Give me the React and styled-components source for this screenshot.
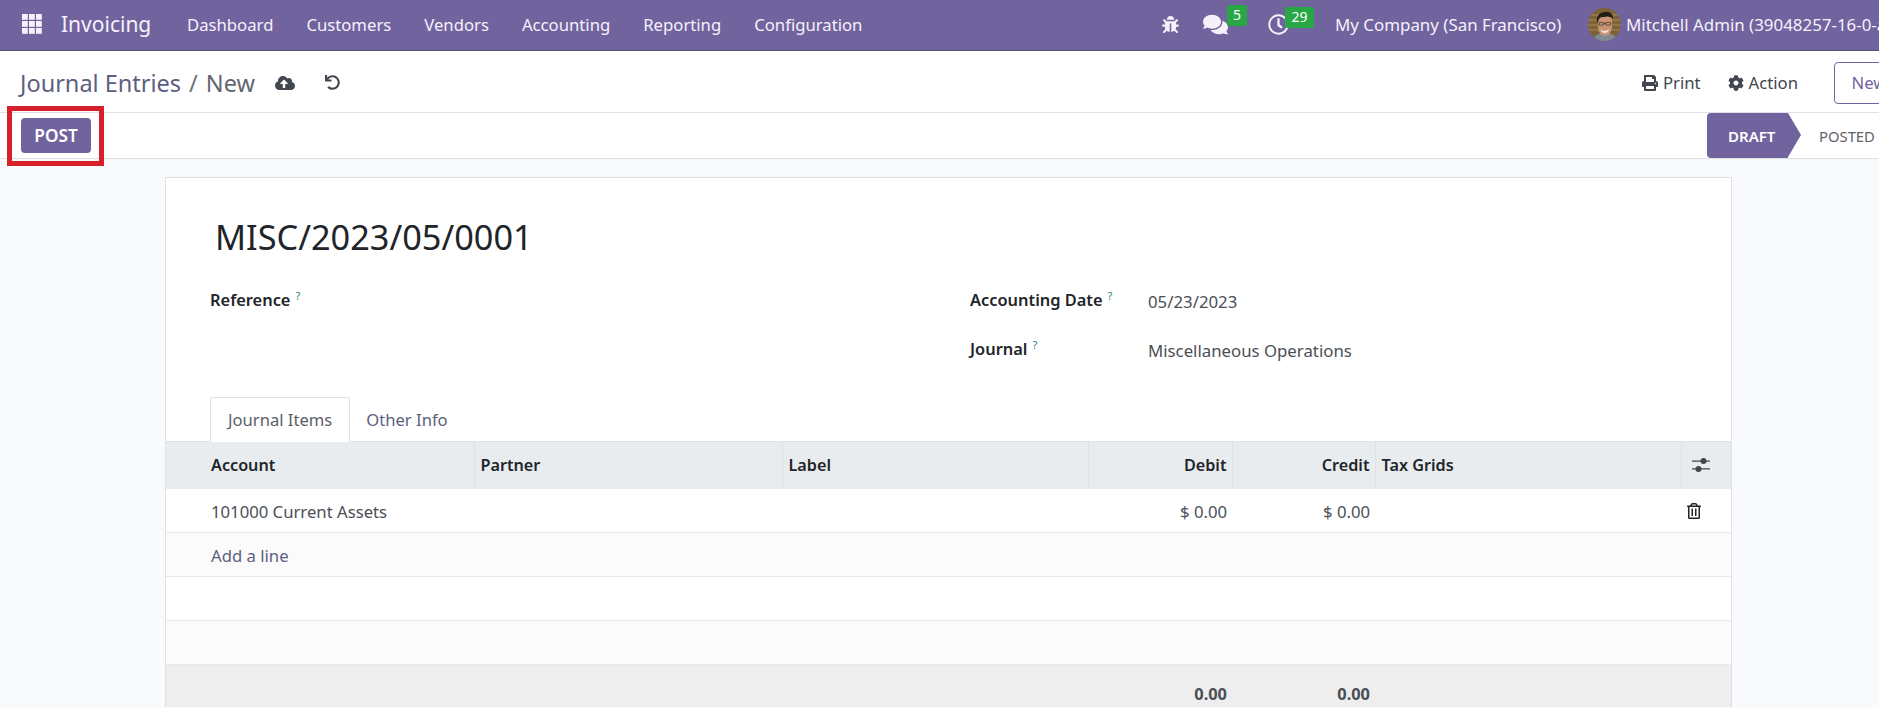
import React from 'react'
import styled, { createGlobalStyle } from 'styled-components'
import {
  FaBug,
  FaComments,
  FaCloudUploadAlt,
  FaUndo,
  FaPrint,
  FaCog,
  FaRegTrashAlt,
  FaRegClock,
} from 'react-icons/fa'

const FONT = '"Noto Sans", "Open Sans", "Liberation Sans", sans-serif'

const menus = ['Dashboard', 'Customers', 'Vendors', 'Accounting', 'Reporting', 'Configuration']

const Global = createGlobalStyle`
  html, body { margin: 0; padding: 0; }
  body {
    font-family: ${FONT};
    font-size: 16.7px;
    color: #4b4f56;
    background: #f9fafb;
  }
  * { box-sizing: border-box; }
`

function AppsIcon() {
  const cells = []
  for (let y = 0; y < 3; y++) {
    for (let x = 0; x < 3; x++) {
      cells.push(<rect key={x + '-' + y} x={x * 7} y={y * 7} width="5.8" height="5.8" />)
    }
  }
  return (
    <svg width="20" height="20" viewBox="0 0 20 20" fill="#f5f2fb">
      {cells}
    </svg>
  )
}

function SlidersIcon() {
  return (
    <svg width="18" height="18" viewBox="0 0 18 18" fill="#41464f">
      <path d="M0 4.500h18v1.200H0zM0 12.300h18v1.200H0z" />
      <circle cx="11.500" cy="5" r="3" />
      <circle cx="6.500" cy="13" r="3" />
    </svg>
  )
}

function Avatar() {
  return (
    <svg width="33" height="33" viewBox="0 0 33 33">
      <defs>
        <clipPath id="face-clip">
          <circle cx="16.500" cy="16.500" r="16.500" />
        </clipPath>
      </defs>
      <g clipPath="url(#face-clip)">
        <rect width="33" height="33" fill="#7d6238" />
        <path d="M0 7h33M0 12h33M0 17h33M0 22h33" stroke="#a58a57" strokeWidth="1.200" />
        <path d="M5 33c1-6 6-8 12-8s11 2 12 8z" fill="#7f8a94" />
        <path d="M10 11c1-4 4-5 8-5 4 0 6 3 6 6v8c-1 5-4 8-7 8-4 0-7-4-7-9z" fill="#c99473" />
        <path d="M9 14c-1-6 3-10 8-10 5-1 8 2 8 7-2-2-5-3-8-2-3 0-5 0-6 2l-1 3z" fill="#241d1a" />
        <path d="M11 14.500h4.600v2.600H11zM18 14.500h4.600v2.600H18zM15.600 15.500H18" fill="none" stroke="#3a3330" strokeWidth="0.700" />
        <path d="M12.500 21.500c2 2 6 2 8.500-.5-.5 3-2.500 4-4.200 4s-3.600-1-4.300-3.500z" fill="#f1e8de" />
      </g>
    </svg>
  )
}

export default function App() {
  return (
    <Page>
      <Global />
      <NavBar>
        <AppsButton>
          <AppsIcon />
        </AppsButton>
        <Brand>Invoicing</Brand>
        <MenuList>
          {menus.map((m) => (
            <MenuItem key={m}>{m}</MenuItem>
          ))}
        </MenuList>
        <Systray>
          <TrayBug>
            <FaBug size={17} />
          </TrayBug>
          <TrayMessages>
            <FaComments size={25} />
            <Badge>5</Badge>
          </TrayMessages>
          <TrayActivity>
            <ClockIcon>
              <FaRegClock size={21} />
            </ClockIcon>
            <Badge $wide>29</Badge>
          </TrayActivity>
          <CompanyName>My Company (San Francisco)</CompanyName>
          <UserMenu>
            <Avatar />
            <UserName>Mitchell Admin (39048257-16-0-all)</UserName>
          </UserMenu>
        </Systray>
      </NavBar>

      <ControlPanel>
        <Breadcrumb>
          <Crumb>Journal Entries</Crumb>
          <CrumbSep>/</CrumbSep>
          <CrumbActive>New</CrumbActive>
        </Breadcrumb>
        <SaveButton>
          <FaCloudUploadAlt size={20} />
        </SaveButton>
        <DiscardButton>
          <FaUndo size={15} />
        </DiscardButton>
        <Actions>
          <ActionLink>
            <FaPrint size={16} />
            Print
          </ActionLink>
          <ActionLink>
            <FaCog size={16} />
            Action
          </ActionLink>
          <NewButton>New</NewButton>
        </Actions>
      </ControlPanel>

      <StatusBar>
        <PostWrap>
          <PostButton>POST</PostButton>
          <Highlight />
        </PostWrap>
        <Statuses>
          <StatusCurrent>DRAFT</StatusCurrent>
          <StatusNext>POSTED</StatusNext>
        </Statuses>
      </StatusBar>

      <Sheet>
        <SheetHead>
          <Title>MISC/2023/05/0001</Title>
          <FieldColumns>
            <FieldColumn>
              <FieldRow>
                <FieldLabel>
                  Reference<Help>?</Help>
                </FieldLabel>
              </FieldRow>
            </FieldColumn>
            <FieldColumn>
              <FieldRow>
                <FieldLabel>
                  Accounting Date<Help>?</Help>
                </FieldLabel>
                <FieldValue>05/23/2023</FieldValue>
              </FieldRow>
              <FieldRow>
                <FieldLabel>
                  Journal<Help>?</Help>
                </FieldLabel>
                <FieldValue>Miscellaneous Operations</FieldValue>
              </FieldRow>
            </FieldColumn>
          </FieldColumns>
          <Tabs>
            <Tab $active>Journal Items</Tab>
            <Tab>Other Info</Tab>
          </Tabs>
        </SheetHead>

        <Lines>
          <colgroup>
            <col style={{ width: 308 }} />
            <col style={{ width: 308 }} />
            <col style={{ width: 306 }} />
            <col style={{ width: 144 }} />
            <col style={{ width: 143 }} />
            <col style={{ width: 306 }} />
            <col />
          </colgroup>
          <thead>
            <tr>
              <HeadCell $first>Account</HeadCell>
              <HeadCell>Partner</HeadCell>
              <HeadCell>Label</HeadCell>
              <HeadCell $right>Debit</HeadCell>
              <HeadCell $right>Credit</HeadCell>
              <HeadCell>Tax Grids</HeadCell>
              <HeadCell $icon>
                <SlidersIcon />
              </HeadCell>
            </tr>
          </thead>
          <tbody>
            <Row>
              <Cell $first>101000 Current Assets</Cell>
              <Cell />
              <Cell />
              <Cell $right>$ 0.00</Cell>
              <Cell $right>$ 0.00</Cell>
              <Cell />
              <Cell $icon>
                <FaRegTrashAlt size={16} />
              </Cell>
            </Row>
            <Row $alt>
              <Cell $first colSpan={7}>
                <AddLine>Add a line</AddLine>
              </Cell>
            </Row>
            <Row>
              <Cell colSpan={7} />
            </Row>
            <Row $alt>
              <Cell colSpan={7} />
            </Row>
          </tbody>
          <tfoot>
            <tr>
              <FootCell colSpan={3} />
              <FootCell $right>0.00</FootCell>
              <FootCell $right>0.00</FootCell>
              <FootCell colSpan={2} />
            </tr>
          </tfoot>
        </Lines>
      </Sheet>
    </Page>
  )
}

const Page = styled.div`
  width: 100%;
  height: 100vh;
  overflow: hidden;
  display: flex;
  flex-direction: column;
`

const NavBar = styled.header`
  height: 51px;
  flex-shrink: 0;
  display: flex;
  align-items: center;
  padding-bottom: 2px;
  background: #71639e;
  border-bottom: 1px solid #5d5170;
  color: #f4f1fa;
  white-space: nowrap;
  overflow: hidden;
`

const AppsButton = styled.div`
  display: flex;
  flex-shrink: 0;
  margin-left: 22px;
  width: 39px;
`

const Brand = styled.span`
  flex-shrink: 0;
  font-size: 21px;
  width: 110px;
`

const MenuList = styled.nav`
  display: flex;
  flex-shrink: 0;
  gap: 33px;
  margin-left: 16px;
  width: 675px;
`

const MenuItem = styled.span`
  font-size: 16.7px;
`

const Systray = styled.div`
  display: flex;
  align-items: center;
  flex-shrink: 0;
  margin-left: 300px;
`

const TrayBug = styled.span`
  display: flex;
  width: 41px;
`

const TrayMessages = styled.span`
  position: relative;
  display: flex;
  width: 65px;
`

const TrayActivity = styled.span`
  position: relative;
  display: flex;
  width: 67px;
`

const ClockIcon = styled.span`
  display: flex;
  stroke: currentColor;
  stroke-width: 30px;
`

const Badge = styled.span`
  position: absolute;
  top: -7px;
  left: ${(p) => (p.$wide ? '17px' : '24px')};
  min-width: ${(p) => (p.$wide ? '29px' : '20px')};
  height: 21px;
  border-radius: 2px;
  background: #28a745;
  color: #fff;
  font-size: 14px;
  line-height: 19px;
  text-align: center;
`

const CompanyName = styled.span`
  font-size: 16.9px;
  width: 253px;
`

const UserMenu = styled.span`
  display: flex;
  align-items: center;
  gap: 5px;
`

const UserName = styled.span`
  font-size: 16.9px;
`

const ControlPanel = styled.div`
  height: 62px;
  flex-shrink: 0;
  display: flex;
  align-items: center;
  padding: 2px 0 0 20px;
  background: #fff;
  border-bottom: 1px solid #dee2e6;
`

const Breadcrumb = styled.div`
  display: flex;
  align-items: center;
  gap: 8px;
  font-size: 23.5px;
  width: 255px;
  white-space: nowrap;
`

const Crumb = styled.span`
  color: #5c5f80;
`

const CrumbSep = styled.span`
  color: #6b6f78;
`

const CrumbActive = styled.span`
  color: #62666f;
`

const SaveButton = styled.span`
  display: flex;
  color: #41464f;
  width: 50px;
`

const DiscardButton = styled.span`
  display: flex;
  color: #41464f;
`

const Actions = styled.div`
  display: flex;
  align-items: center;
  gap: 27px;
  margin-left: auto;
  margin-right: -25px;
`

const ActionLink = styled.span`
  display: flex;
  align-items: center;
  gap: 5px;
  font-size: 16.7px;
  color: #41464f;
`

const NewButton = styled.span`
  display: flex;
  align-items: center;
  justify-content: center;
  width: 70px;
  height: 42px;
  margin-left: 9px;
  border: 1px solid #71639e;
  border-radius: 4px;
  font-size: 16.7px;
  color: #71639e;
  background: #fff;
`

const StatusBar = styled.div`
  height: 46px;
  flex-shrink: 0;
  display: flex;
  align-items: center;
  justify-content: space-between;
  background: #fff;
  border-bottom: 1px solid #dee2e6;
`

const PostWrap = styled.div`
  position: relative;
  margin-left: 21px;
`

const PostButton = styled.button`
  display: block;
  width: 70px;
  height: 35px;
  padding: 0;
  border: 0;
  border-radius: 4px;
  background: #71639e;
  color: #fff;
  font-family: ${FONT};
  font-size: 17.2px;
  font-weight: 600;
`

const Highlight = styled.span`
  position: absolute;
  left: -14px;
  top: -12px;
  width: 97px;
  height: 60px;
  border: 5px solid #d7202c;
  pointer-events: none;
`

const Statuses = styled.div`
  display: flex;
  align-items: center;
  height: 45px;
  align-self: flex-start;
`

const StatusCurrent = styled.span`
  position: relative;
  display: flex;
  align-items: center;
  width: 81px;
  height: 45px;
  padding-left: 21px;
  border-radius: 4px 0 0 4px;
  background: #71639e;
  color: #fff;
  font-size: 15px;
  font-weight: 600;
  &::after {
    content: '';
    position: absolute;
    left: 100%;
    top: 0;
    border-style: solid;
    border-width: 22.5px 0 22.5px 13px;
    border-color: transparent transparent transparent #71639e;
  }
`

const StatusNext = styled.span`
  display: flex;
  align-items: center;
  width: 91px;
  padding-left: 31px;
  font-size: 14.8px;
  color: #5f636b;
  white-space: nowrap;
`

const Sheet = styled.main`
  width: 1567px;
  margin: 18px 0 0 165px;
  background: #fff;
  border: 1px solid #dee2e6;
  border-bottom: 0;
  flex-shrink: 0;
`

const SheetHead = styled.div`
  padding: 36px 44px 0;
`

const Title = styled.h1`
  margin: 0 0 0 5px;
  font-size: 34.3px;
  line-height: 46px;
  font-weight: 400;
  color: #212529;
`

const FieldColumns = styled.div`
  display: grid;
  grid-template-columns: 760px 1fr;
  margin-top: 25px;
  height: 112px;
`

const FieldColumn = styled.div`
  display: flex;
  flex-direction: column;
  gap: 25px;
`

const FieldRow = styled.div`
  display: flex;
  align-items: flex-start;
  height: 24px;
`

const FieldLabel = styled.span`
  width: 178px;
  font-size: 16.4px;
  font-weight: 600;
  line-height: 22px;
  color: #212529;
`

const Help = styled.sup`
  margin-left: 5px;
  font-size: 11px;
  font-weight: 400;
  color: #2b7f8a;
`

const FieldValue = styled.span`
  font-size: 16.8px;
  line-height: 26px;
  margin-top: 4px;
  color: #4b4f56;
`

const Tabs = styled.div`
  display: flex;
  height: 45px;
  margin-bottom: -1px;
  position: relative;
  z-index: 1;
`

const Tab = styled.span`
  display: flex;
  align-items: center;
  padding: 0 ${(p) => (p.$active ? '17px' : '15px')} 2px;
  font-size: 16.6px;
  color: ${(p) => (p.$active ? '#5b6068' : '#5c5f80')};
  background: ${(p) => (p.$active ? '#fff' : 'transparent')};
  border: 1px solid ${(p) => (p.$active ? '#dee2e6' : 'transparent')};
  border-bottom: 0;
  border-radius: 3px 3px 0 0;
`

const Lines = styled.table`
  width: 100%;
  table-layout: fixed;
  border-collapse: collapse;
`

const HeadCell = styled.th`
  height: 47px;
  padding: ${(p) => (p.$first ? '0 4px 0 45px' : '0 6px')};
  padding-right: ${(p) => (p.$right ? '5px' : '')};
  text-align: ${(p) => (p.$right ? 'right' : 'left')};
  font-size: 16.2px;
  font-weight: 600;
  color: #212529;
  background: #e9ecef;
  border-top: 1px solid #dee2e6;
  border-left: ${(p) => (p.$first ? '0' : '1px solid #dee2e6')};
  svg {
    display: block;
    margin-left: 4px;
  }
`

const Row = styled.tr`
  height: 44px;
  background: ${(p) => (p.$alt ? '#fbfbfb' : '#fff')};
  border-bottom: 1px solid #e7e9ed;
`

const Cell = styled.td`
  padding: ${(p) => (p.$first ? '2px 4px 0 45px' : '2px 6px 0')};
  padding-right: ${(p) => (p.$right ? '5px' : '')};
  text-align: ${(p) => (p.$right ? 'right' : 'left')};
  font-size: 16.7px;
  color: #4b4f56;
  svg {
    display: block;
    margin-left: -1px;
    color: #212529;
  }
`

const AddLine = styled.span`
  color: #5c5f80;
`

const FootCell = styled.td`
  height: 42px;
  padding: 16px 5px 0 6px;
  text-align: ${(p) => (p.$right ? 'right' : 'left')};
  font-size: 16.4px;
  font-weight: 700;
  color: #4b4f56;
  background: #eeeeee;
`
